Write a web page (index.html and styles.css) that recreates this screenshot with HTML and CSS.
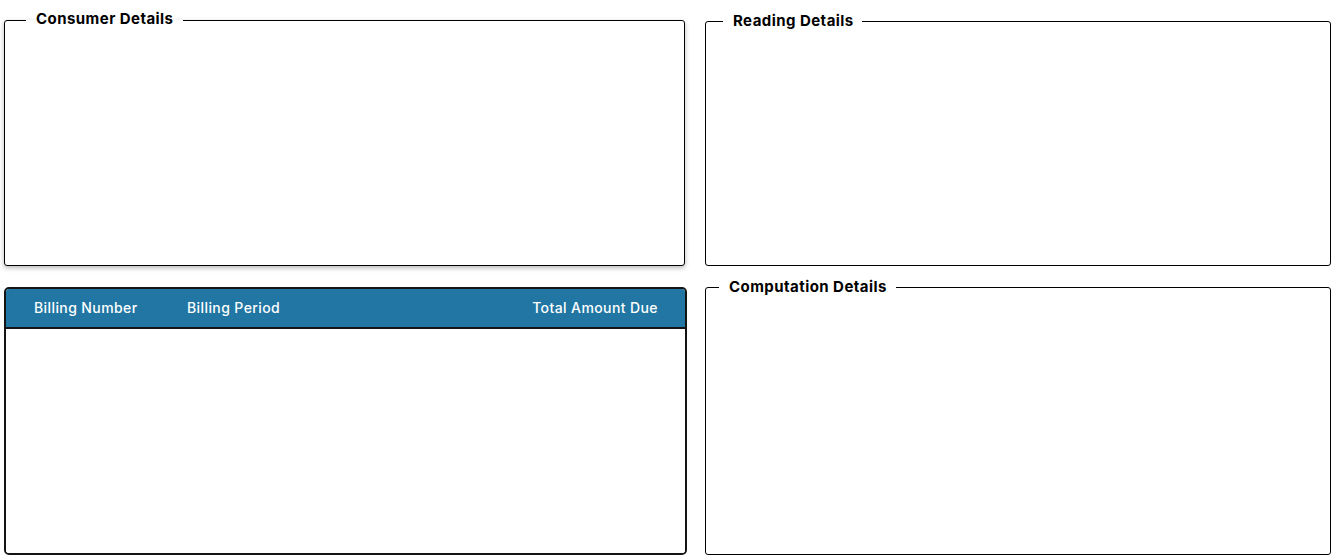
FILE: index.html
```html
<!DOCTYPE html>
<html lang="en">
<head>
<meta charset="utf-8">
<title>Billing</title>
<link rel="stylesheet" href="styles.css">
</head>
<body>
<main class="page">
  <fieldset class="panel panel-shadow">
    <legend class="panel-title">Consumer Details</legend>
  </fieldset>
  <fieldset class="panel panel-reading">
    <legend class="panel-title">Reading Details</legend>
  </fieldset>
  <section class="billing">
    <div class="billing-head">
      <span class="col col-number">Billing Number</span>
      <span class="col col-period">Billing Period</span>
      <span class="col col-total">Total Amount Due</span>
    </div>
    <div class="billing-body"></div>
  </section>
  <fieldset class="panel panel-comp">
    <legend class="panel-title">Computation Details</legend>
  </fieldset>
</main>
</body>
</html>
```
FILE: styles.css
```css
* { box-sizing: border-box; }
html, body { margin: 0; padding: 0; background: #ffffff; }
body {
  font-family: Inter, "Noto Sans", "Liberation Sans", sans-serif;
  color: #000;
  width: 1331px;
  height: 556px;
  overflow: hidden;
}
.page {
  display: grid;
  grid-template-columns: 683px 626px;
  grid-template-rows: 256px 279px;
  column-gap: 18px;
  row-gap: 11px;
  padding: 10px 0 0 4px;
}
.panel {
  margin: 0;
  padding: 0;
  border: 1px solid #000;
  border-radius: 3px;
  min-width: 0;
}
.panel-shadow {
  width: 681px;
  box-shadow: 0 2px 5px rgba(0, 0, 0, 0.28);
}
.panel-reading { margin-top: 1px; height: 255px; }
.panel-comp { height: 278px; }
.panel-title {
  margin-left: 21px;
  padding: 0 10px;
  font-size: 15px;
  font-weight: 700;
  line-height: 20px;
  letter-spacing: 0.45px;
}
.panel-shadow .panel-title { line-height: 17px; padding-bottom: 4px; }
.panel-reading .panel-title { margin-left: 17px; padding: 0 8px 1px 10px; line-height: 19px; }
.panel-comp .panel-title { margin-left: 13px; padding: 0 9px 0 10px; }
.billing {
  margin-top: 10px;
  height: 268px;
  border: 2px solid #141414;
  border-radius: 5px;
  overflow: hidden;
  display: flex;
  flex-direction: column;
}
.billing-head {
  height: 40px;
  background: #2176a3;
  border-bottom: 2px solid #141414;
  display: grid;
  grid-template-columns: 153px 1fr auto;
  align-items: center;
  padding: 0 27px 2px 28px;
  color: #ffffff;
  font-size: 14px;
  font-weight: 500;
  letter-spacing: 0.4px;
}
.billing-body { flex: 1; background: #fff; }
```
